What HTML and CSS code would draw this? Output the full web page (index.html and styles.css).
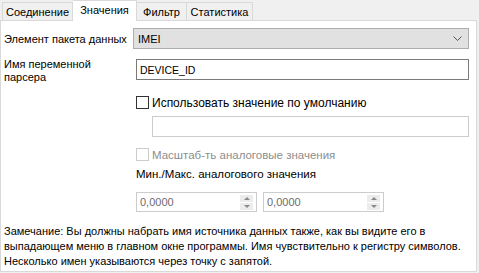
FILE: index.html
```html
<!DOCTYPE html>
<html lang="ru">
<head>
<meta charset="utf-8">
<link rel="stylesheet" href="styles.css">
</head>
<body>
<div class="window">
  <div class="tabs">
    <div class="tab tab-conn">Соединение</div>
    <div class="tab tab-active">Значения</div>
    <div class="tab tab-filter">Фильтр</div>
    <div class="tab tab-stat">Статистика</div>
  </div>
  <div class="panel">
    <div class="row row-combo">
      <div class="label label-combo">Элемент пакета данных</div>
      <div class="combo">
        <span class="combo-text">IMEI</span>
        <svg class="chevron" width="9" height="5" viewBox="0 0 9 5"><polyline points="0.5,0.5 4.5,4.5 8.5,0.5" fill="none" stroke="#555" stroke-width="1"/></svg>
      </div>
    </div>
    <div class="row row-var">
      <div class="label label-var">Имя переменной<br>парсера</div>
      <div class="input">DEVICE_ID</div>
    </div>
    <div class="check-row check-default">
      <span class="checkbox"></span>
      <span class="check-text check-text-big">Использовать значение по умолчанию</span>
    </div>
    <div class="input input-disabled default-input"></div>
    <div class="check-row check-scale">
      <span class="checkbox checkbox-disabled"></span>
      <span class="check-text text-disabled">Масштаб-ть аналоговые значения</span>
    </div>
    <div class="minmax-label">Мин./Макс. аналогового значения</div>
    <div class="spin-row">
      <div class="spin">
        <span class="spin-text">0,0000</span>
        <span class="spin-btns">
          <span class="spin-btn"><span class="tri-up"></span></span>
          <span class="spin-btn"><span class="tri-down"></span></span>
        </span>
      </div>
      <div class="spin">
        <span class="spin-text">0,0000</span>
        <span class="spin-btns">
          <span class="spin-btn"><span class="tri-up"></span></span>
          <span class="spin-btn"><span class="tri-down"></span></span>
        </span>
      </div>
    </div>
    <div class="note">Замечание: Вы должны набрать имя источника данных также, как вы видите его в<br>выпадающем меню в главном окне программы. Имя чувствительно к регистру символов.<br>Несколько имен указываются через точку с запятой.</div>
  </div>
</div>
</body>
</html>
```
FILE: styles.css
```css
html, body {
  margin: 0;
  padding: 0;
  background: #f0f0f0;
}
body {
  width: 479px;
  height: 273px;
  overflow: hidden;
  font-family: "Liberation Sans", Arial, sans-serif;
  font-size: 11px;
  color: #000;
}
.window {
  width: 479px;
}
.tabs {
  display: flex;
  align-items: flex-end;
  height: 20px;
  padding-left: 2px;
  box-sizing: border-box;
}
.tab {
  box-sizing: border-box;
  height: 18px;
  border: 1px solid #d9d9d9;
  border-bottom: none;
  background: #f0f0f0;
  display: flex;
  align-items: center;
  justify-content: center;
  line-height: 14px;
  padding-top: 1px;
  white-space: nowrap;
}
.tab + .tab { border-left: none; }
.tab-conn { width: 71px; }
.tab-active {
  width: 64px;
  height: 21px;
  margin-bottom: -1px;
  background: #fff;
  position: relative;
  z-index: 1;
  padding-top: 0;
  padding-bottom: 2px;
}
.tab-filter { width: 50px; }
.tab-stat { width: 66px; }
.panel {
  box-sizing: border-box;
  width: 477px;
  height: 252px;
  border: 1px solid #d9d9d9;
  background: #fff;
  padding: 7px 7px 0 3px;
}
.row {
  display: flex;
}
.row-combo {
  align-items: center;
  height: 21px;
}
.label-combo {
  width: 129px;
  flex: none;
  white-space: nowrap;
}
.combo {
  flex: 1;
  box-sizing: border-box;
  height: 21px;
  background: #e1e1e1;
  border: 1px solid #adadad;
  display: flex;
  align-items: center;
  padding: 0 6px 0 4px;
}
.combo-text { flex: 1; }
.chevron { display: block; }
.row-var {
  margin-top: 10px;
}
.label-var {
  width: 132px;
  flex: none;
  line-height: 13px;
  margin-top: -1px;
}
.input {
  flex: 1;
  box-sizing: border-box;
  height: 21px;
  border: 1px solid #7a7a7a;
  background: #fff;
  padding: 0 3px;
  display: flex;
  align-items: center;
  font-size: 10.5px;
}
.check-row {
  display: flex;
  align-items: center;
  margin-left: 132px;
  height: 13px;
}
.check-default { margin-top: 12px; }
.checkbox {
  box-sizing: border-box;
  width: 13px;
  height: 13px;
  border: 1px solid #333;
  background: #fff;
  flex: none;
}
.checkbox-disabled { border-color: #cccccc; }
.check-text {
  margin-left: 3px;
  line-height: 14px;
  white-space: nowrap;
  font-size: 11.5px;
}
.check-text-big { font-size: 12px; }
.text-disabled { color: #8d8d8d; }
.input-disabled {
  border-color: #cccccc;
}
.default-input {
  margin-left: 148px;
  margin-top: 7px;
}
.check-scale { margin-top: 11px; }
.minmax-label {
  margin-left: 132px;
  margin-top: 6px;
  line-height: 14px;
  font-size: 11.5px;
}
.spin-row {
  display: flex;
  gap: 6px;
  margin-left: 132px;
  margin-top: 11px;
}
.spin {
  box-sizing: border-box;
  width: 121px;
  height: 20px;
  border: 1px solid #cccccc;
  display: flex;
  align-items: center;
  padding: 0 3px 0 3px;
  color: #6d6d6d;
  font-size: 11px;
}
.spin-text { flex: 1; }
.spin-btns {
  display: flex;
  flex-direction: column;
  gap: 1px;
  width: 13px;
}
.spin-btn {
  height: 7px;
  background: #ececec;
  display: flex;
  align-items: center;
  justify-content: center;
}
.tri-up {
  width: 0; height: 0;
  border-left: 3px solid transparent;
  border-right: 3px solid transparent;
  border-bottom: 3px solid #8a8a8a;
}
.tri-down {
  width: 0; height: 0;
  border-left: 3px solid transparent;
  border-right: 3px solid transparent;
  border-top: 3px solid #8a8a8a;
}
.note {
  margin-top: 12px;
  line-height: 15px;
  white-space: nowrap;
}
```
